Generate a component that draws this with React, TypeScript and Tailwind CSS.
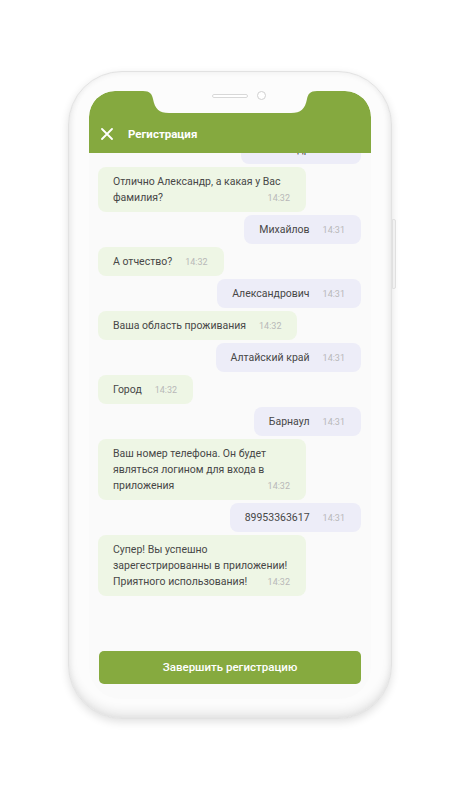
import React from "react";

type Msg = { side: "l" | "r"; lines: string[]; time: string };

const msgs: Msg[] = [
  { side: "r", lines: ["Александр"], time: "14:31" },
  { side: "l", lines: ["Отлично Александр, а какая у Вас", "фамилия?"], time: "14:32" },
  { side: "r", lines: ["Михайлов"], time: "14:31" },
  { side: "l", lines: ["А отчество?"], time: "14:32" },
  { side: "r", lines: ["Александрович"], time: "14:31" },
  { side: "l", lines: ["Ваша область проживания"], time: "14:32" },
  { side: "r", lines: ["Алтайский край"], time: "14:31" },
  { side: "l", lines: ["Город"], time: "14:32" },
  { side: "r", lines: ["Барнаул"], time: "14:31" },
  { side: "l", lines: ["Ваш номер телефона. Он будет", "являться логином для входа в", "приложения"], time: "14:32" },
  { side: "r", lines: ["89953363617"], time: "14:31" },
  { side: "l", lines: ["Супер! Вы успешно", "зарегестрированны в приложении!", "Приятного использования!"], time: "14:32" },
];

function Bubble({ m, first }: { m: Msg; first: boolean }) {
  const multi = m.lines.length > 1;
  const bg = m.side === "l" ? "bg-[#eef6e5] self-start" : "bg-[#ededf8] self-end";
  return (
    <div
      className={`${bg} ${multi ? "w-[208px]" : ""} ${first ? "mt-[-18px]" : ""} rounded-[8px] pl-[15px] pr-[16px] pt-[7px] pb-[6px] text-[10.5px] leading-[16px] text-[#474747]`}
    >
      {m.lines.slice(0, -1).map((l, i) => (
        <div key={i} className="whitespace-nowrap">{l}</div>
      ))}
      <div className="flex items-center">
        <span className="whitespace-nowrap">{m.lines[m.lines.length - 1]}</span>
        <span className={`${multi ? "ml-auto" : "ml-[13px]"} text-[9px] text-[#b8b8b8]`}>{m.time}</span>
      </div>
    </div>
  );
}

export default function App() {
  return (
    <div
      className="w-[460px] h-[790px] bg-white flex items-center justify-center"
      style={{ fontFamily: "Roboto, 'Noto Sans', sans-serif" }}
    >
      <div className="relative w-[324px] h-[648px] rounded-[54px] bg-[#fcfcfc] border border-[#e2e2e2] shadow-[0_3px_8px_rgba(0,0,0,0.12),inset_0_-7px_10px_rgba(0,0,0,0.07),inset_0_0_6px_rgba(0,0,0,0.07)] pl-[20px] pr-[20px] pt-[19px]">
        {/* side button */}
        <div className="absolute right-[-5px] top-[147px] w-[4px] h-[70px] rounded-r-[2px] bg-[#f1f1f1] border border-[#e0e0e0]" />
        {/* screen */}
        <div className="relative h-[608px] rounded-b-[32px] bg-[#fafafa] flex flex-col overflow-hidden rounded-t-[26px]">
          {/* header */}
          <div className="relative z-10 h-[62px] shrink-0 bg-[#85a93f] rounded-t-[26px] flex items-end pb-[12px] pl-[12px]">
            <svg width="12" height="12" viewBox="0 0 12 12" className="mb-[1px]">
              <path d="M1 1 L11 11 M11 1 L1 11" stroke="white" strokeWidth="1.8" strokeLinecap="round" />
            </svg>
            <span className="ml-[15px] text-[11.5px] font-bold text-white leading-[14px]">Регистрация</span>
          </div>
          {/* notch */}
          <svg className="absolute z-20 top-0 left-[54px]" width="174" height="23" viewBox="0 0 174 23">
            <path
              d="M0 0 H174 C167 0 165 3 164 8 C162 18 158 22 148 22 H26 C16 22 12 18 10 8 C9 3 7 0 0 0 Z"
              fill="#fcfcfc"
            />
          </svg>
          <div className="absolute z-30 top-[3px] left-[123px] w-[36px] h-[4px] rounded-full bg-white border border-[#d8d8d8]" />
          <div className="absolute z-30 top-[0px] left-[168px] w-[9px] h-[9px] rounded-full bg-white border border-[#d0d0d0]" />
          {/* chat */}
          <div className="flex flex-col gap-[3px] pl-[9px] pr-[10px]">
            {msgs.map((m, i) => (
              <Bubble key={i} m={m} first={i === 0} />
            ))}
          </div>
          <div className="mt-auto pl-[10px] pr-[10px] pb-[15px]">
            <div className="h-[33px] rounded-[5px] bg-[#86aa3f] flex items-center justify-center text-white text-[11.5px] font-medium">
              Завершить регистрацию
            </div>
          </div>
        </div>
      </div>
    </div>
  );
}
